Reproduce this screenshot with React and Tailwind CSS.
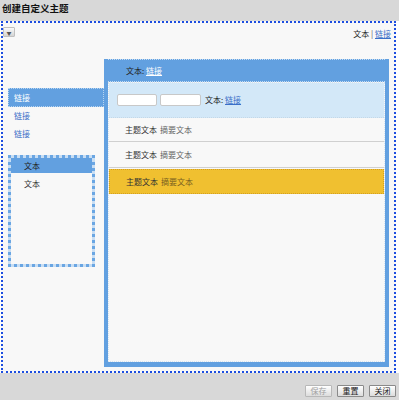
import React from "react";

const font = { fontFamily: '"Noto Sans CJK SC", "Noto Sans", sans-serif' };

function Btn({ children, disabled }) {
  return (
    <div
      className={`w-[27px] h-[12px] flex items-center justify-center text-[8px] leading-none border rounded-[1px] bg-gradient-to-b from-[#ffffff] to-[#dcdcdc] ${disabled ? "text-[#a0a0a0] border-[#b8b8b8]" : "text-[#222] border-[#8a8a8a]"}`}
    >
      {children}
    </div>
  );
}

export default function App() {
  return (
    <div className="w-[399px] h-[400px] bg-[#d8d8d8] flex flex-col" style={font}>
      <div className="h-[21px] shrink-0 pl-[2px] pt-[1px] text-[9.5px] leading-[14px] font-bold text-[#111]">
        创建自定义主题
      </div>
      <div className="h-[352px] shrink-0 bg-white flex">
        <div className="ml-[1px] w-[395px] h-[352px] border-2 border-dotted border-[#1d4ee0] bg-[#f8f8f8] flex flex-col">
          <div className="h-[36px] shrink-0 flex items-start justify-between pr-[3px] pt-[4px]">
            <div className="w-[12px] h-[10px] border border-[#c0c0c0] bg-gradient-to-b from-[#fafafa] to-[#d4d4d4] rounded-[1px] flex items-center justify-center text-[5px] text-[#555] leading-none">
              ▼
            </div>
            <div className="text-[8px] leading-[10px] mt-[2px] text-[#222]">
              文本 <span className="text-[#555]">|</span>{" "}
              <span className="text-[#3a6fc8] underline">链接</span>
            </div>
          </div>
          <div className="flex flex-1 pl-[5px] pr-[5px] pb-[4px]">
            <div className="w-[96px] shrink-0 pt-[29px] flex flex-col">
              <div className="h-[19px] bg-[#62a0e0] border border-dotted border-[#b7d4f0] flex items-center pl-[5px] text-[8px] text-white">
                链接
              </div>
              <div className="h-[18px] flex items-center pl-[6px] text-[8px] text-[#3a6fc8]">链接</div>
              <div className="h-[17px] flex items-center pl-[6px] text-[8px] text-[#3a6fc8]">链接</div>
              <div className="mt-[13px] w-[87px] h-[112px] border-[3px] border-dotted border-[#6aa6e3] bg-[#c9def3] flex flex-col">
                <div className="h-[15px] bg-[#62a0e0] flex items-center pl-[13px] text-[8px] text-[#222]">文本</div>
                <div className="flex-1 bg-[#f8f8f8] pl-[13px] pt-[5px] text-[8px] text-[#333]">文本</div>
              </div>
            </div>
            <div className="flex-1 bg-[#62a0e0] px-[4px] pb-[5px] flex flex-col">
              <div className="h-[23px] shrink-0 border-t border-b border-dotted border-[#c3dcf3] flex items-center pl-[18px] text-[8px] text-[#222]">
                文本:&nbsp;<span className="text-white underline">链接</span>
              </div>
              <div className="flex-1 bg-[#f8f8f8] border border-dotted border-[#d6e4f0] flex flex-col">
                <div className="h-[35px] shrink-0 bg-[#d3e8f8] border-b border-dotted border-[#c4d8e8] flex items-center pl-[8px] gap-[3px] text-[8px] text-[#222]">
                  <div className="w-[40px] h-[12px] bg-white border border-[#c8c8c8] rounded-[2px]" />
                  <div className="w-[41px] h-[12px] bg-white border border-[#c8c8c8] rounded-[2px]" />
                  <span className="ml-[1px]">
                    文本:&nbsp;<span className="text-[#3a6fc8] underline">链接</span>
                  </span>
                </div>
                <div className="h-[24px] flex items-center pl-[16px] text-[8px] text-[#333] border-b border-[#d0d0d0]">
                  主题文本 <span className="text-[#666] ml-[3px]">摘要文本</span>
                </div>
                <div className="h-[26px] flex items-center pl-[16px] text-[8px] text-[#333] border-b border-[#d0d0d0]">
                  主题文本 <span className="text-[#666] ml-[3px]">摘要文本</span>
                </div>
                <div className="mt-[1px] h-[25px] flex items-center pl-[16px] text-[8px] text-[#333] bg-[#f0c030] border border-dotted border-[#d4a020]">
                  主题文本 <span className="text-[#7a6020] ml-[3px]">摘要文本</span>
                </div>
              </div>
            </div>
          </div>
        </div>
      </div>
      <div className="flex-1 flex items-end justify-end gap-[5px] pr-[3px] pb-[3px]">
        <Btn disabled>保存</Btn>
        <Btn>重置</Btn>
        <Btn>关闭</Btn>
      </div>
    </div>
  );
}
